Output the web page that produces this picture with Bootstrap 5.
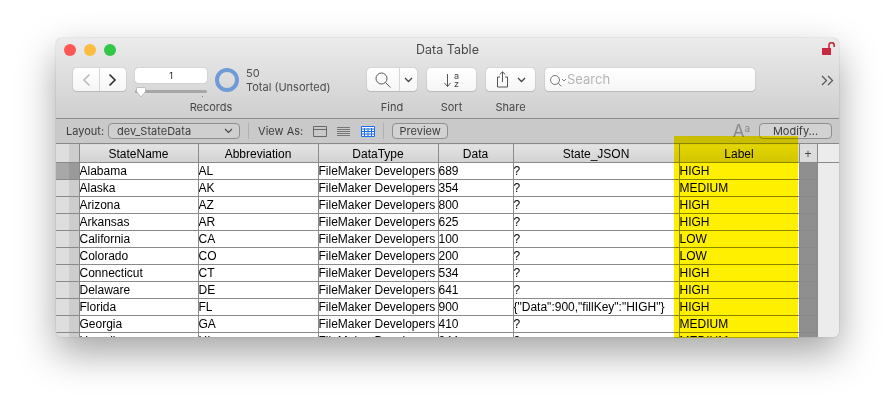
<!DOCTYPE html>
<html lang="en">
<head>
<meta charset="utf-8">
<title>Data Table</title>
<link href="https://cdn.jsdelivr.net/npm/bootstrap@5.3.0/dist/css/bootstrap.min.css" rel="stylesheet">
<style>
html,body{height:100%;}
body{background:#fff;margin:0;overflow:hidden;font-family:"Inter","Liberation Sans",sans-serif;color:#3f3f3f;}
.stage{position:relative;width:895px;height:411px;padding:38px 56px 0;}
.win{width:783px;height:299px;border-radius:6px;overflow:hidden;background:#ececec;box-shadow:0 0 1px rgba(0,0,0,.45),0 16px 38px rgba(0,0,0,.36);}
.chrome{height:80px;background:linear-gradient(#ebebeb,#cfcfcf);padding:0 8px;}
.titlerow{height:24px;display:grid;grid-template-columns:1fr auto 1fr;align-items:center;font-size:12.5px;color:#4a4a4a;}
.lights{gap:8px;}
.lights i{display:block;width:12px;height:12px;border-radius:50%;}
.lockic{margin:-4px -5px 0 0;}
.toolrow{padding:6px 0 0 9px;height:38px;}
.toolrow>*{flex:none;}
.wbtn{background:linear-gradient(#fff,#f6f6f6);border-radius:4px;box-shadow:0 0 1px rgba(0,0,0,.45),0 1px 1px rgba(0,0,0,.1);height:23px;}
.nav2{width:53px;}
.nav2 span{width:26px;height:100%;}
.nav2 span+span{border-left:1px solid #d6d6d6;}
.recs{width:72px;margin-left:9px;}
.recfield{height:15px;background:#fff;border-radius:3px;box-shadow:0 0 1px rgba(0,0,0,.4);font-size:9px;color:#222;line-height:15px;text-align:center;}
.track{height:3px;background:#a6a6a6;border-radius:2px;margin-top:7px;position:relative;}
.thumb{position:absolute;left:1px;top:-3px;}
.tick{position:absolute;left:67px;top:6px;width:1px;height:1px;background:#777;}
.pie{width:24px;height:24px;border:4px solid #6f9bd6;border-radius:50%;margin-left:8px;}
.counts{font-size:11px;line-height:14px;margin:-2px 0 0 7px;width:121px;color:#4c4c4c;}
.labelrow{font-size:11px;color:#474747;height:14px;line-height:14px;}
.lab{display:block;text-align:center;flex:none;}
.findb{width:50px;}
.findb span:first-child{width:33px;height:100%;border-right:1px solid #d6d6d6;}
.findb span:last-child{width:17px;}
.sortb{width:49px;margin-left:10px;gap:1px;}
.sortlet{font-size:9px;line-height:8px;color:#444;width:7px;text-align:center;}
.shareb{width:49px;margin-left:10px;}
.search{width:210px;margin-left:10px;font-size:13px;color:#b5b5b5;padding:1px 0 0 4px;}
.more{margin-left:66px;width:13px;padding-top:7px;}
.layoutbar{height:25px;background:#c9c9c9;border-top:1px solid #8c8c8c;font-size:11px;color:#3c3c3c;padding:0 7px 0 10px;}
.popup{width:132px;height:16px;border:1px solid #8f8f8f;border-radius:4px;margin-left:4px;padding:0 6px 0 8px;line-height:14px;background:#cfcfcf;}
.vsep{width:1px;height:16px;background:#b0b0b0;}
.pvbtn{width:56px;height:16px;border:1px solid #8f8f8f;border-radius:4px;background:#d2d2d2;line-height:14px;text-align:center;margin-left:8px;}
.modbtn{width:73px;height:16px;border:1px solid #8f8f8f;border-radius:4px;background:#d2d2d2;line-height:14px;text-align:center;margin-left:9px;}
.aa{margin-left:auto;font-size:17px;color:#8a8a8a;line-height:16px;}
.aa sup{font-size:10px;top:-.5em;}
.vic1{margin-left:10px;}
.vic2{margin-left:10px;}
.vic3{margin-left:11px;}
.vsep1{margin:0 9px 0 8px;}
.vsep2{margin-left:8px;}
.tablewrap{height:194px;overflow:hidden;background:#ececec;}
table.grid{border-collapse:collapse;table-layout:fixed;width:783px;font-family:"Liberation Sans",sans-serif;font-size:12px;color:#000;margin:0;}
table.grid th{height:19px;font-weight:400;text-align:center;background:linear-gradient(#e4e4e4,#d2d2d2);border:1px solid #8a8a8a;padding:3px 0 0;line-height:15px;}
table.grid td{height:17px;background:#fff;border:1px solid #8a8a8a;padding:0 0 1px 0;line-height:14px;white-space:nowrap;overflow:hidden;}
table.grid tr>.gut{background:#dedede;border-left:0;box-shadow:inset -10px 0 0 #cdcdcd;}
table.grid tr.cur>.gut{background:#a8a8a8;box-shadow:inset -10px 0 0 #9a9a9a;}
table.grid tr>.rgut{background:#8f8f8f;}
table.grid th.plus{background:#dcdcdc;color:#444;}
table.grid th.blank{background:#ececec;border-left:0;border-right:0;}
table.grid td.blank{background:#ececec;border:0;}
.hilite{position:absolute;left:674px;top:136px;width:124px;height:202px;background:#fff000;mix-blend-mode:multiply;}
</style>
</head>
<body>
<div class="stage">
  <div class="win">
    <div class="chrome">
      <div class="titlerow">
        <div class="d-flex lights"><i style="background:#fc5753"></i><i style="background:#fdbc40"></i><i style="background:#33c748"></i></div>
        <div>Data Table</div>
        <div class="d-flex justify-content-end">
          <svg class="lockic" width="14" height="13" viewBox="0 0 14 13"><rect x="0" y="6" width="9" height="7" fill="#c9283e"/><path d="M7 6V3.200a2.500 2.500 0 0 1 5.200 0V5" fill="none" stroke="#c9283e" stroke-width="1.600"/></svg>
        </div>
      </div>
      <div class="d-flex toolrow">
        <div class="wbtn nav2 d-flex">
          <span class="d-flex align-items-center justify-content-center"><svg width="9" height="14" viewBox="0 0 9 14"><path d="M7.500 1.500 2 7l5.500 5.500" fill="none" stroke="#b9b9b9" stroke-width="1.500"/></svg></span>
          <span class="d-flex align-items-center justify-content-center"><svg width="9" height="14" viewBox="0 0 9 14"><path d="M1.500 1.500 7 7l-5.500 5.500" fill="none" stroke="#333" stroke-width="1.700"/></svg></span>
        </div>
        <div class="recs">
          <div class="recfield">1</div>
          <div class="track"><svg class="thumb" width="10" height="11" viewBox="0 0 10 11"><path d="M.5 1.500q0-1 1-1h7q1 0 1 1v3L5 10 .5 4.500z" fill="#fff" stroke="#a0a0a0" stroke-width=".6"/></svg><div class="tick"></div></div>
        </div>
        <div class="pie"></div>
        <div class="counts">50<br>Total (Unsorted)</div>
        <div class="wbtn findb d-flex">
          <span class="d-flex align-items-center justify-content-center"><svg width="18" height="18" viewBox="0 0 18 18"><circle cx="7.500" cy="7.500" r="5.500" fill="none" stroke="#555"/><path d="m11.500 11.500 5 5" stroke="#555"/></svg></span>
          <span class="d-flex align-items-center justify-content-center"><svg width="9" height="6" viewBox="0 0 9 6"><path d="m1 1 3.500 3.500L8 1" fill="none" stroke="#444" stroke-width="1.300"/></svg></span>
        </div>
        <div class="wbtn sortb d-flex align-items-center justify-content-center">
          <svg width="9" height="16" viewBox="0 0 9 16"><path d="M4.500 2v12.500M1.500 11l3 3.500 3-3.500" fill="none" stroke="#555"/></svg><span class="sortlet">a<br>z</span>
        </div>
        <div class="wbtn shareb d-flex align-items-center justify-content-center gap-2">
          <svg width="13" height="17" viewBox="0 0 13 17"><path d="M4 6H1.500v10h10V6H9M6.500 11V1M3.700 3.500 6.500.8l2.800 2.700" fill="none" stroke="#555"/></svg>
          <svg width="9" height="6" viewBox="0 0 9 6"><path d="m1 1 3.500 3.500L8 1" fill="none" stroke="#444" stroke-width="1.300"/></svg>
        </div>
        <div class="wbtn search d-flex align-items-center">
          <svg width="18" height="13" viewBox="0 0 18 13"><circle cx="6" cy="6" r="4.500" fill="none" stroke="#777"/><path d="m9.300 9.300 3 3" stroke="#777"/><path d="m13 5 2 2 2-2" fill="none" stroke="#777" stroke-width=".9"/></svg>
          <span>Search</span>
        </div>
        <div class="more d-flex"><svg width="13" height="11" viewBox="0 0 13 11"><path d="m1 1 4.500 4.500L1 10M7 1l4.500 4.500L7 10" fill="none" stroke="#555" stroke-width="1.200"/></svg></div>
      </div>
      <div class="labelrow d-flex">
        <span class="lab" style="width:60px;margin-left:117px">Records</span>
        <span class="lab" style="width:50px;margin-left:126px">Find</span>
        <span class="lab" style="width:49px;margin-left:10px">Sort</span>
        <span class="lab" style="width:49px;margin-left:10px">Share</span>
      </div>
    </div>
    <div class="layoutbar d-flex align-items-center">
      <span>Layout:</span>
      <div class="popup d-flex justify-content-between align-items-center"><span>dev_StateData</span><svg width="9" height="6" viewBox="0 0 9 6"><path d="m1 1 3.500 3.500L8 1" fill="none" stroke="#444" stroke-width="1.100"/></svg></div>
      <div class="vsep vsep1"></div>
      <span>View As:</span>
      <svg class="vic1" width="14" height="11" viewBox="0 0 14 11"><path d="M.5.500h13v10H.500zM.5 3.500h13" fill="none" stroke="#666"/></svg>
      <svg class="vic2" width="13" height="11" viewBox="0 0 13 11"><path d="M0 1.500h13M0 3.500h13M0 5.500h13M0 7.500h13M0 9.500h13" stroke="#777" stroke-width="1"/></svg>
      <svg class="vic3" width="14" height="11" viewBox="0 0 14 11"><path d="M.5.500h13v10H.500z" fill="#fff" stroke="#1a6cf0"/><path d="M0 3h14M0 5.500h14M0 8h14M3.500 2v9M7 2v9M10.500 2v9" stroke="#1a6cf0"/></svg>
      <div class="vsep vsep2"></div>
      <div class="pvbtn">Preview</div>
      <div class="aa">A<sup>a</sup></div>
      <div class="modbtn">Modify...</div>
    </div>
    <div class="tablewrap">
      <table class="grid">
        <colgroup><col style="width:23px"><col style="width:119px"><col style="width:120px"><col style="width:120px"><col style="width:75px"><col style="width:166px"><col style="width:120px"><col style="width:18px"><col style="width:22px"></colgroup>
        <thead><tr><th class="gut"></th><th>StateName</th><th>Abbreviation</th><th>DataType</th><th>Data</th><th>State_JSON</th><th>Label</th><th class="plus">+</th><th class="blank"></th></tr></thead>
        <tbody>
          <tr class="cur"><td class="gut"></td><td>Alabama</td><td>AL</td><td>FileMaker Developers</td><td>689</td><td>?</td><td>HIGH</td><td class="rgut"></td><td class="blank"></td></tr>
          <tr><td class="gut"></td><td>Alaska</td><td>AK</td><td>FileMaker Developers</td><td>354</td><td>?</td><td>MEDIUM</td><td class="rgut"></td><td class="blank"></td></tr>
          <tr><td class="gut"></td><td>Arizona</td><td>AZ</td><td>FileMaker Developers</td><td>800</td><td>?</td><td>HIGH</td><td class="rgut"></td><td class="blank"></td></tr>
          <tr><td class="gut"></td><td>Arkansas</td><td>AR</td><td>FileMaker Developers</td><td>625</td><td>?</td><td>HIGH</td><td class="rgut"></td><td class="blank"></td></tr>
          <tr><td class="gut"></td><td>California</td><td>CA</td><td>FileMaker Developers</td><td>100</td><td>?</td><td>LOW</td><td class="rgut"></td><td class="blank"></td></tr>
          <tr><td class="gut"></td><td>Colorado</td><td>CO</td><td>FileMaker Developers</td><td>200</td><td>?</td><td>LOW</td><td class="rgut"></td><td class="blank"></td></tr>
          <tr><td class="gut"></td><td>Connecticut</td><td>CT</td><td>FileMaker Developers</td><td>534</td><td>?</td><td>HIGH</td><td class="rgut"></td><td class="blank"></td></tr>
          <tr><td class="gut"></td><td>Delaware</td><td>DE</td><td>FileMaker Developers</td><td>641</td><td>?</td><td>HIGH</td><td class="rgut"></td><td class="blank"></td></tr>
          <tr><td class="gut"></td><td>Florida</td><td>FL</td><td>FileMaker Developers</td><td>900</td><td>{"Data":900,"fillKey":"HIGH"}</td><td>HIGH</td><td class="rgut"></td><td class="blank"></td></tr>
          <tr><td class="gut"></td><td>Georgia</td><td>GA</td><td>FileMaker Developers</td><td>410</td><td>?</td><td>MEDIUM</td><td class="rgut"></td><td class="blank"></td></tr>
          <tr><td class="gut"></td><td>Hawaii</td><td>HI</td><td>FileMaker Developers</td><td>244</td><td>?</td><td>MEDIUM</td><td class="rgut"></td><td class="blank"></td></tr>
        </tbody>
      </table>
    </div>
  </div>
  <div class="hilite"></div>
</div>
<script src="https://cdn.jsdelivr.net/npm/bootstrap@5.3.0/dist/js/bootstrap.bundle.min.js"></script>
</body>
</html>
